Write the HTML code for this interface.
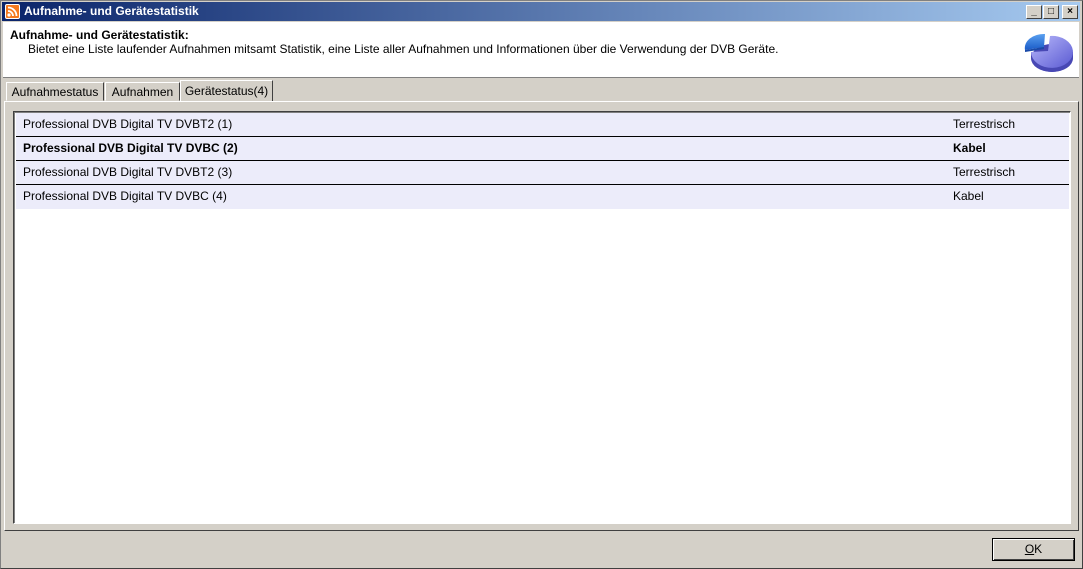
<!DOCTYPE html>
<html><head><meta charset="utf-8"><style>
*{margin:0;padding:0;box-sizing:border-box}
body{width:1083px;height:569px;background:#d4d0c8;font-family:"Liberation Sans",Arial,sans-serif;font-size:12px;position:relative;overflow:hidden;color:#000}
.abs{position:absolute}
#win{left:0;top:0;width:1083px;height:569px;border:1px solid #808080;border-right-color:#404040;border-bottom-color:#404040}
#title{left:2px;top:2px;width:1078px;height:19px;background:linear-gradient(90deg,#0a246a,#a6caf0);color:#fff;font-weight:bold;font-size:12px;line-height:19px;padding-left:22px}
.tb{top:5px;width:16px;height:14px;background:#d4d0c8;border:1px solid;border-color:#fff #404040 #404040 #fff;font-size:10px;line-height:12px;text-align:center;font-weight:bold;color:#000}
#hdr{left:3px;top:22px;width:1076px;height:56px;background:#fff;border-bottom:1px solid #808080}
.tab{top:82px;height:19px;border:1px solid;border-color:#fff #404040 transparent #fff;line-height:18px;text-align:center;font-size:12px;color:#000;white-space:nowrap}
#panel{left:4px;top:101px;width:1075px;height:430px;border:1px solid;border-color:#fff #404040 #404040 #fff}
#list{left:13px;top:111px;width:1058px;height:413px;background:#fff;border:1px solid;border-color:#404040 #fff #fff #404040;box-shadow:inset 1px 1px 0 #808080}
.row{position:absolute;left:2px;width:1053px;height:24px;background:#ececfa;line-height:22px;font-size:12px;border-bottom:1px solid #000}
.row span{position:absolute}
</style></head><body>
<div class="abs" id="win"></div>
<div class="abs" id="title">Aufnahme- und Gerätestatistik</div>
<div class="abs" style="left:5px;top:4px;width:15px;height:15px;background:#f47a20;border-radius:2px;border:1px solid #fff">
<svg width="13" height="13" viewBox="0 0 13 13"><circle cx="3" cy="10" r="1.6" fill="#fff"/><path d="M2 6a5 5 0 0 1 5 5M2 2.5a8.5 8.5 0 0 1 8.5 8.5" stroke="#fff" stroke-width="1.8" fill="none"/></svg></div>
<div class="abs tb" style="left:1026px">_</div>
<div class="abs tb" style="left:1043px">□</div>
<div class="abs tb" style="left:1062px">×</div>
<div class="abs" id="hdr">
<div class="abs" style="left:7px;top:6px;font-weight:bold;font-size:12px">Aufnahme- und Gerätestatistik:</div>
<div class="abs" style="left:25px;top:20px;font-size:12px">Bietet eine Liste laufender Aufnahmen mitsamt Statistik, eine Liste aller Aufnahmen und Informationen über die Verwendung der DVB Geräte.</div>
<svg class="abs" style="left:1020px;top:8px" width="54" height="46" viewBox="0 0 54 46">
<defs><linearGradient id="g" x1="0" y1="0" x2="1" y2="1"><stop offset="0" stop-color="#b8b8fa"/><stop offset="1" stop-color="#5a5ad2"/></linearGradient>
<linearGradient id="b" x1="0" y1="0" x2="0" y2="1"><stop offset="0" stop-color="#5aa0f0"/><stop offset="1" stop-color="#1a5cc8"/></linearGradient></defs>
<path d="M8 22 L8 28 A21 14 0 0 0 50 28 L50 22 Z" fill="#4848b4"/>
<ellipse cx="29" cy="28" rx="21" ry="14" fill="#4848b4"/>
<path d="M27 6 A21 16 0 1 1 8 22 L25 21 Z" fill="url(#g)"/>
<path d="M2 20 A19 14 0 0 1 22 4 L21 17 Z" fill="url(#b)"/>
<path d="M2 20 L21 17 L21 19 L2 22 Z" fill="#1a4aa8"/>
</svg>
</div>
<div class="abs tab" style="left:6px;width:98px">Aufnahmestatus</div>
<div class="abs tab" style="left:105px;width:75px">Aufnahmen</div>
<div class="abs tab" style="left:180px;top:80px;width:93px;height:22px;background:#d4d0c8;border-color:#fff #404040 #d4d0c8 #fff;line-height:20px">Gerätestatus(4)</div>
<div class="abs" id="panel"></div>
<div class="abs" id="list">
<div class="row" style="top:1px"><span style="left:7px">Professional DVB Digital TV DVBT2 (1)</span><span style="left:937px">Terrestrisch</span></div>
<div class="row" style="top:25px;font-weight:bold"><span style="left:7px">Professional DVB Digital TV DVBC (2)</span><span style="left:937px">Kabel</span></div>
<div class="row" style="top:49px"><span style="left:7px">Professional DVB Digital TV DVBT2 (3)</span><span style="left:937px">Terrestrisch</span></div>
<div class="row" style="top:73px;border-bottom:none"><span style="left:7px">Professional DVB Digital TV DVBC (4)</span><span style="left:937px">Kabel</span></div>
</div>
<div class="abs" style="left:992px;top:538px;width:83px;height:23px;border:1px solid #000;box-shadow:inset 1px 1px 0 #fff,inset -1px -1px 0 #404040;text-align:center;line-height:21px;font-size:12px"><u>O</u>K</div>
</body></html>
